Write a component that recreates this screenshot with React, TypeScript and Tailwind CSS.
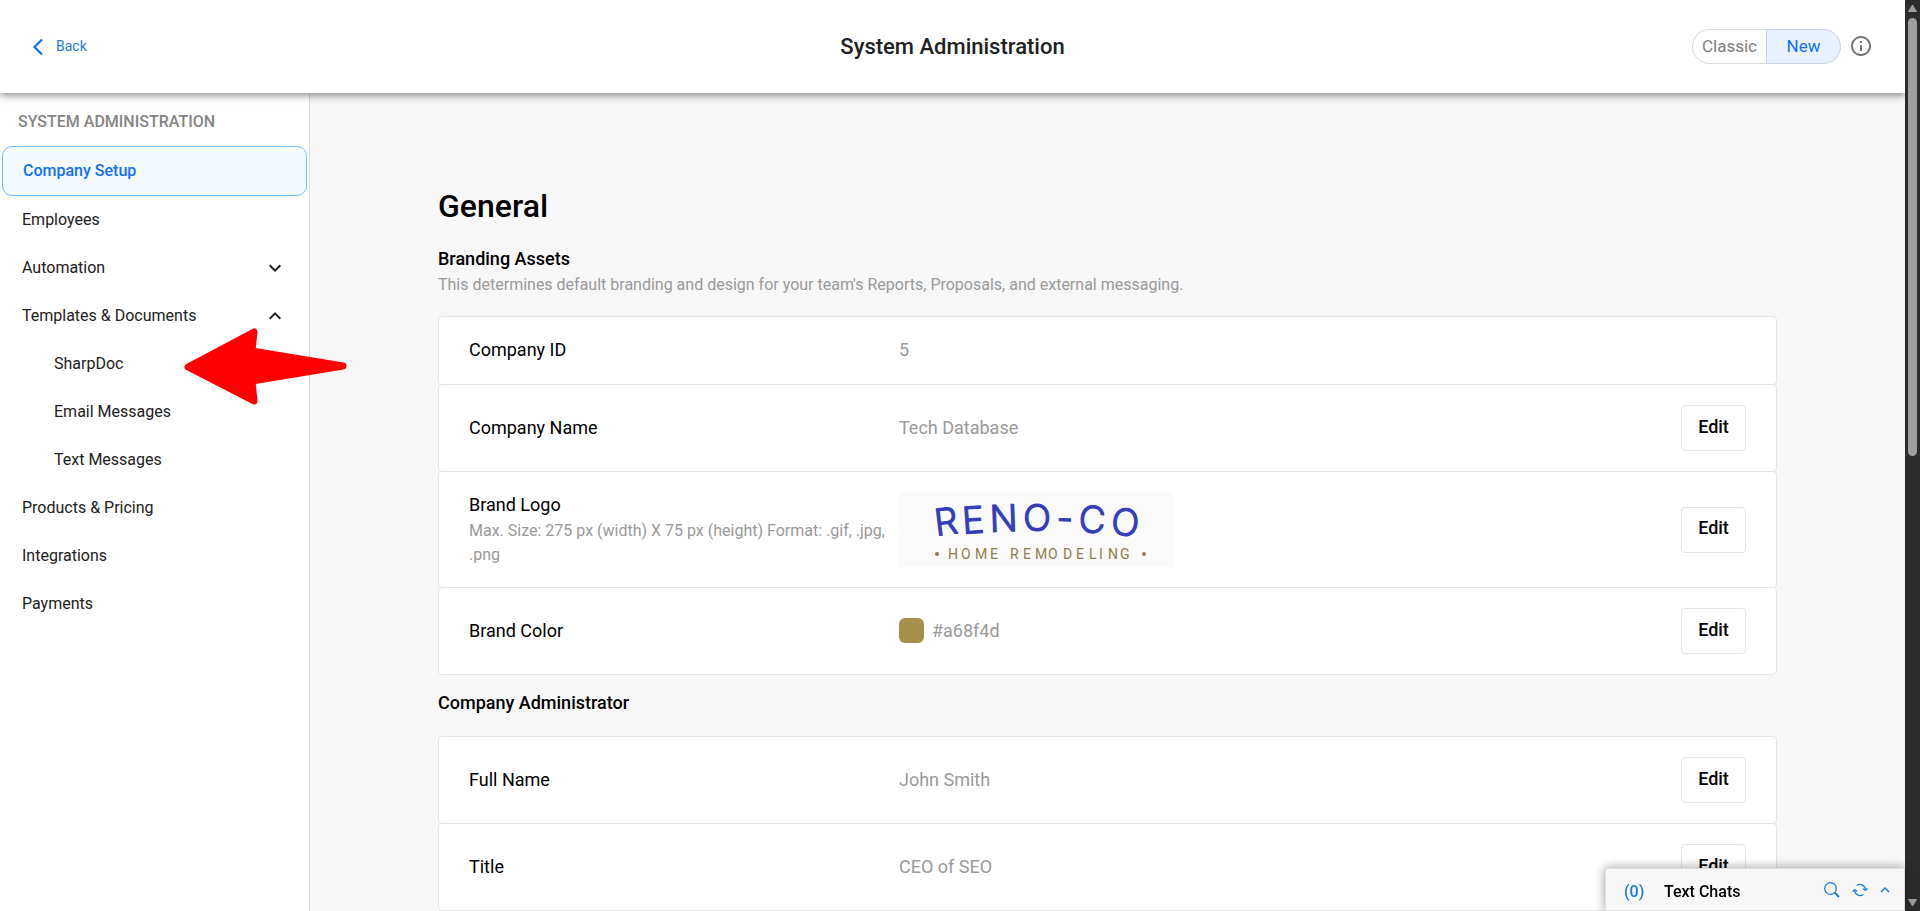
import { useState } from "react";
import type { ReactNode } from "react";
import {
  MdKeyboardArrowDown,
  MdKeyboardArrowUp,
  MdOutlineInfo,
} from "react-icons/md";

interface NavItem {
  label: string;
  children?: string[];
}

const NAV_ITEMS: NavItem[] = [
  { label: "Company Setup" },
  { label: "Employees" },
  { label: "Automation", children: [] },
  {
    label: "Templates & Documents",
    children: ["SharpDoc", "Email Messages", "Text Messages"],
  },
  { label: "Products & Pricing" },
  { label: "Integrations" },
  { label: "Payments" },
];

function Header() {
  const [version, setVersion] = useState("New");

  return (
    <header className="relative z-20 h-[93px] shrink-0 bg-white shadow-[0_2px_8px_rgba(0,0,0,0.5)] grid grid-cols-3 items-center pl-8 pr-8">
      <a href="#" className="flex items-center gap-3 pb-0.5 text-sm text-[#1f7ae0]">
        <svg width="12" height="18" viewBox="0 0 12 18" fill="none" className="mt-0.5">
          <path d="M10 1.500L2.500 9l7.500 7.500" stroke="#0a70f5" strokeWidth="2.200" />
        </svg>
        Back
      </a>
      <h1 className="text-center text-[22px] font-medium text-[#212121]">
        System Administration
      </h1>
      <div className="flex items-center justify-end gap-2">
        <div className="flex h-[35px] text-[17px]">
          <button
            type="button"
            onClick={() => setVersion("Classic")}
            className="w-[74px] rounded-l-full border border-r-0 border-[#d9dce0] bg-white text-[#7d7d7d]"
          >
            Classic
          </button>
          <button
            type="button"
            aria-pressed={version === "New"}
            onClick={() => setVersion("New")}
            className="w-[75px] rounded-r-full border border-[#c5d0e0] bg-[#e9f1fe] text-[#0f70f5]"
          >
            New
          </button>
        </div>
        <button type="button" aria-label="Info" className="pb-0.5">
          <MdOutlineInfo className="w-6 h-6 text-[#757575]" />
        </button>
      </div>
    </header>
  );
}

function Sidebar() {
  const [open, setOpen] = useState<string | null>("Templates & Documents");

  return (
    <aside className="relative w-[310px] shrink-0 border-r border-[#dcdcdc] bg-white text-base text-[#212121]">
      <h2 className="flex h-[53px] items-center pt-1 pl-[18px] font-medium text-[#858585]">
        SYSTEM ADMINISTRATION
      </h2>
      <nav>
        {NAV_ITEMS.map((item, i) => {
          if (i === 0) {
            return (
              <a
                key={item.label}
                href="#"
                className="mx-0.5 flex h-[50px] items-center rounded-[10px] border border-[#74bcff] bg-[#f5faff] pl-5 font-medium text-[#0f70f5]"
              >
                {item.label}
              </a>
            );
          }
          if (!item.children) {
            return (
              <a key={item.label} href="#" className="flex h-12 items-center pl-[22px]">
                {item.label}
              </a>
            );
          }
          const isOpen = open === item.label;
          return (
            <div key={item.label}>
              <button
                type="button"
                onClick={() => setOpen(isOpen ? null : item.label)}
                className="flex h-12 w-full items-center justify-between pl-[22px] pr-[22px]"
              >
                {item.label}
                {isOpen ? (
                  <MdKeyboardArrowUp className="w-6 h-6" />
                ) : (
                  <MdKeyboardArrowDown className="w-6 h-6" />
                )}
              </button>
              {isOpen &&
                item.children.map((child) => (
                  <a key={child} href="#" className="flex h-12 items-center pl-[54px]">
                    {child}
                  </a>
                ))}
            </div>
          );
        })}
      </nav>

      {/* pointer towards SharpDoc */}
      <svg
        className="absolute left-[184px] top-[235px] z-10"
        width="163"
        height="77"
        viewBox="0 0 163 77"
      >
        <path
          d="M4 39L70 4L68 23L159 38L68 53L70 73Z"
          fill="#ff0000"
          stroke="#ff0000"
          strokeWidth="7"
          strokeLinejoin="round"
        />
      </svg>
    </aside>
  );
}

function BrandLogo() {
  return (
    <svg width="275" height="75" viewBox="0 0 275 75" className="bg-[#fafafa]">
      <text
        x="37 64 91 124 157 179 211"
        y="44 42 40 39 39 40 42"
        rotate="-7 -4 -2 0 2 3 6"
        className="font-[Inter,sans-serif] text-[37px] font-light"
        fill="#343cba"
        stroke="#343cba"
        strokeWidth="1.1"
        strokeLinejoin="round"
      >
        RENO-CO
      </text>
      <text
        x="49 62 76 91 101 111 124 136 149 164 177 190 200 209 221"
        y="67"
        className="text-sm"
        fill="#8f7d4a"
      >
        HOME REMODELING
      </text>
      <circle cx="38" cy="62" r="2" fill="#8f7d4a" />
      <circle cx="245" cy="62" r="2" fill="#8f7d4a" />
    </svg>
  );
}

interface RowProps {
  label: string;
  hint?: string;
  editable?: boolean;
  children: ReactNode;
}

function Row({ label, hint, editable = true, children }: RowProps) {
  return (
    <div className="-mt-px flex items-center rounded border border-[#e4e4e4] bg-white px-[30px] py-5 text-lg leading-[25px]">
      <div className="w-[430px] shrink-0 text-black">
        <p className="pb-0.5">{label}</p>
        {hint && <p className="pr-2 text-base leading-6 text-[#999999]">{hint}</p>}
      </div>
      <div className="flex flex-1 items-center gap-2 text-[#999999]">{children}</div>
      {editable && (
        <button
          type="button"
          className="h-[46px] w-[65px] rounded border border-[#e4e4e4] bg-white pb-1 font-medium text-black"
        >
          Edit
        </button>
      )}
    </div>
  );
}

function ChatBar() {
  return (
    <div className="fixed bottom-0 right-[15px] z-30 flex h-[43px] w-[300px] items-center border border-[#dedede] bg-[#f7f7f7] pl-[18px] pr-[14px] pt-1 text-base font-medium shadow-[0_0_10px_rgba(0,0,0,0.4)]">
      <span className="w-10 text-[#1f7ae0]">(0)</span>
      <span className="flex-1 text-black">Text Chats</span>
      <div className="flex items-center gap-3 pb-1 text-[#1f7ae0]">
        <button type="button" aria-label="Search chats">
          <svg width="16" height="16" viewBox="0 0 16 16" fill="none" stroke="currentColor">
            <circle cx="6.500" cy="6.500" r="5.800" strokeWidth="1.300" />
            <path d="M10.800 10.800L15 15" strokeWidth="2" />
          </svg>
        </button>
        <button type="button" aria-label="Refresh chats">
          <svg width="16" height="16" viewBox="0 0 16 16" fill="none" stroke="currentColor" strokeWidth="1.300">
            <path d="M4.800 3.500A5.400 5.400 0 0 1 13.300 8M11.200 12.500A5.400 5.400 0 0 1 2.700 8" />
            <path d="M10.800 6.800L13.300 8.300L15.600 6.500M0.400 9.500L2.700 7.700L5.200 9.200" />
          </svg>
        </button>
        <button type="button" aria-label="Expand chats">
          <svg width="10" height="16" viewBox="0 0 10 16" fill="none" stroke="currentColor" strokeWidth="1.500">
            <path d="M1 10L5 6L9 10" />
          </svg>
        </button>
      </div>
    </div>
  );
}

function ScrollTrack() {
  return (
    <div className="flex w-[15px] shrink-0 flex-col items-center justify-between bg-[#2c2c2c] py-1">
      <div className="flex h-1/2 flex-col items-center gap-1.5">
        <svg width="9" height="8" viewBox="0 0 9 8" className="shrink-0">
          <path d="M4.500 1L8.500 7.500H0.500Z" fill="#9f9f9f" stroke="#9f9f9f" strokeLinejoin="round" />
        </svg>
        <div className="w-[9px] flex-1 rounded-full bg-[#9f9f9f]" />
      </div>
      <svg width="9" height="8" viewBox="0 0 9 8">
        <path d="M4.500 7L0.500 0.500H8.500Z" fill="#9f9f9f" stroke="#9f9f9f" strokeLinejoin="round" />
      </svg>
    </div>
  );
}

export default function App() {
  return (
    <div className="flex h-screen overflow-hidden bg-[#f7f7f7] font-[Roboto,sans-serif]">
      <div className="flex min-w-0 flex-1 flex-col overflow-hidden">
        <Header />
        <div className="flex min-h-0 flex-1">
          <Sidebar />
          <main className="min-w-0 flex-1 overflow-hidden px-32 pt-[89px]">
            <h2 className="text-[32px] leading-[48px] font-medium text-black">General</h2>

            <section className="pt-4">
              <h3 className="pb-0.5 text-lg leading-[25px] font-medium text-black">
                Branding Assets
              </h3>
              <p className="text-base leading-6 text-[#999999]">
                This determines default branding and design for your team's Reports, Proposals, and
                external messaging.
              </p>
              <div className="mt-5">
                <Row label="Company ID" editable={false}>
                  <p className="pb-0.5">5</p>
                </Row>
                <Row label="Company Name">
                  <p className="pb-0.5">Tech Database</p>
                </Row>
                <Row
                  label="Brand Logo"
                  hint="Max. Size: 275 px (width) X 75 px (height) Format: .gif, .jpg, .png"
                >
                  <BrandLogo />
                </Row>
                <Row label="Brand Color">
                  <span className="mb-0.5 h-[25px] w-[25px] rounded-md bg-[#a68f4d]" />
                  <p className="pb-0.5">#a68f4d</p>
                </Row>
              </div>
            </section>

            <section className="pt-[15px]">
              <h3 className="pb-0.5 text-lg leading-[25px] font-medium text-black">
                Company Administrator
              </h3>
              <div className="mt-5">
                <Row label="Full Name">
                  <p className="pb-0.5">John Smith</p>
                </Row>
                <Row label="Title">
                  <p className="pb-0.5">CEO of SEO</p>
                </Row>
              </div>
            </section>
          </main>
        </div>
      </div>
      <ScrollTrack />
      <ChatBar />
    </div>
  );
}
